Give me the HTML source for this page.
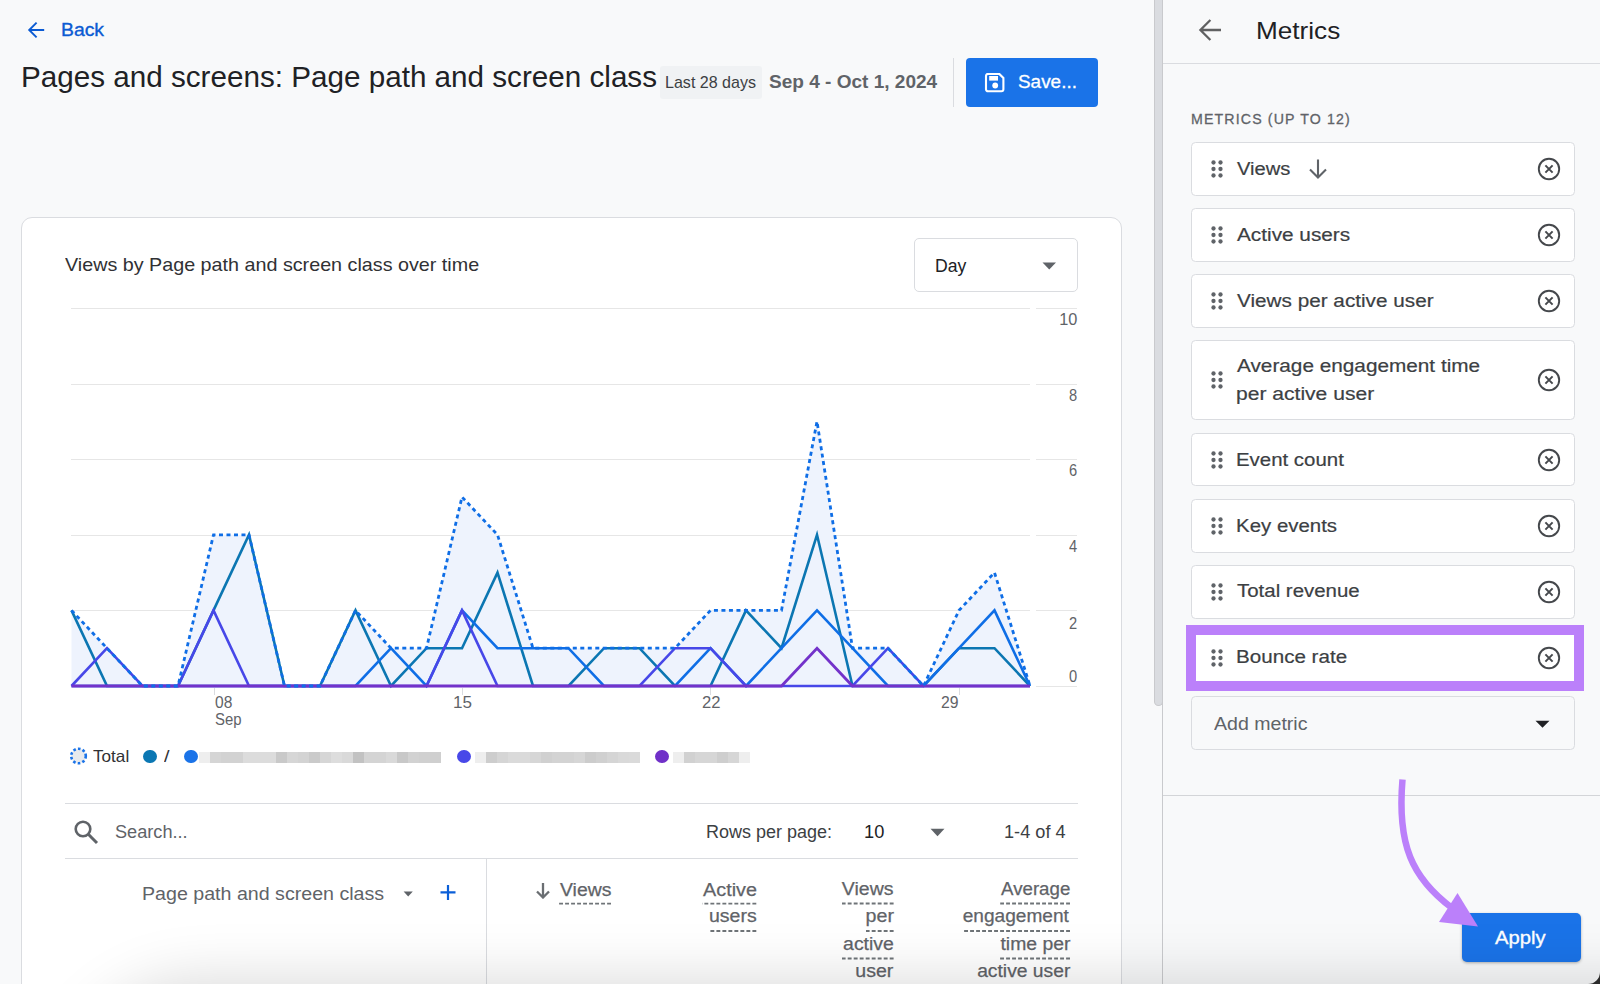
<!DOCTYPE html><html><head><meta charset="utf-8"><style>
*{margin:0;padding:0;box-sizing:border-box}
html,body{width:1600px;height:984px;overflow:hidden;background:#f8f9fa}
body{position:relative;font-family:"Liberation Sans",sans-serif}
.t{position:absolute;white-space:nowrap}
.abs{position:absolute}
</style></head><body><svg class="abs" style="left:26px;top:20px" width="20" height="20" viewBox="0 0 20 20"><path d="M18.2 10H4M10.6 2.6L3.2 10l7.4 7.4" fill="none" stroke="#0b5bd3" stroke-width="1.9"/></svg>
<div id="back" class="t" style="left:61.46px;top:21.00px;font-size:18.7px;line-height:18.7px;color:#0b5bd3;font-weight:400;transform:scaleX(1.0364);transform-origin:left 0;-webkit-text-stroke:0.35px #0b5bd3;">Back</div>
<div id="title" class="t" style="left:20.68px;top:62.00px;font-size:29.3px;line-height:29.3px;color:#202124;font-weight:400;transform:scaleX(1.0117);transform-origin:left 0;">Pages and screens: Page path and screen class</div>
<div class="abs" style="left:660px;top:66px;width:102px;height:32.5px;background:#f0f2f4;border-radius:3px"></div>
<div id="chip" class="t" style="left:665.46px;top:74.00px;font-size:17px;line-height:17px;color:#3c4043;font-weight:400;transform:scaleX(0.9442);transform-origin:left 0;">Last 28 days</div>
<div id="date" class="t" style="left:769.30px;top:73.00px;font-size:18.5px;line-height:18.5px;color:#5f6368;font-weight:700;transform:scaleX(1.0285);transform-origin:left 0;">Sep 4 - Oct 1, 2024</div>
<div class="abs" style="left:953px;top:58px;width:1px;height:49px;background:#dadce0"></div>
<div class="abs" style="left:966px;top:58px;width:132px;height:48.5px;background:#1a73e8;border-radius:4px"></div>
<svg class="abs" style="left:984px;top:73px" width="22" height="20" viewBox="0 0 22 20"><path d="M4 0.9h11.3l4.1 4.1v11.3a2 2 0 0 1-2 2H4a2 2 0 0 1-2-2V2.9a2 2 0 0 1 2-2z" fill="none" stroke="#fff" stroke-width="2.1"/><rect x="5.2" y="3" width="8.8" height="4.6" fill="#fff"/><circle cx="11.2" cy="12.5" r="2.9" fill="#fff"/></svg>
<div id="save" class="t" style="left:1018.00px;top:73.00px;font-size:18.7px;line-height:18.7px;color:#fff;font-weight:400;transform:scaleX(1.0127);transform-origin:left 0;-webkit-text-stroke:0.3px #fff;">Save...</div>
<div class="abs" style="left:21px;top:217px;width:1101px;height:800px;background:#fff;border:1px solid #dadce0;border-radius:11px"></div>
<div id="ctitle" class="t" style="left:65.30px;top:256.00px;font-size:18.5px;line-height:18.5px;color:#303134;font-weight:400;transform:scaleX(1.0663);transform-origin:left 0;">Views by Page path and screen class over time</div>
<div class="abs" style="left:913.5px;top:237.5px;width:164.5px;height:54.5px;background:#fff;border:1px solid #dadce0;border-radius:5px"></div>
<div id="day" class="t" style="left:935.06px;top:257.00px;font-size:18.7px;line-height:18.7px;color:#202124;font-weight:400;transform:scaleX(0.9426);transform-origin:left 0;">Day</div>
<svg class="abs" style="left:1042px;top:262px" width="15" height="8" viewBox="0 0 15 8"><path d="M0.5 0.5h13.5L7.25 7.5z" fill="#5f6368"/></svg>
<svg class="abs" style="left:0;top:0" width="1600" height="984" viewBox="0 0 1600 984"><line x1="71" y1="610.5" x2="1030" y2="610.5" stroke="#e6e6e6" stroke-width="1"/><line x1="1036" y1="610.5" x2="1077" y2="610.5" stroke="#e6e6e6" stroke-width="1"/><line x1="71" y1="535.5" x2="1030" y2="535.5" stroke="#e6e6e6" stroke-width="1"/><line x1="1036" y1="535.5" x2="1077" y2="535.5" stroke="#e6e6e6" stroke-width="1"/><line x1="71" y1="459.5" x2="1030" y2="459.5" stroke="#e6e6e6" stroke-width="1"/><line x1="1036" y1="459.5" x2="1077" y2="459.5" stroke="#e6e6e6" stroke-width="1"/><line x1="71" y1="384.5" x2="1030" y2="384.5" stroke="#e6e6e6" stroke-width="1"/><line x1="1036" y1="384.5" x2="1077" y2="384.5" stroke="#e6e6e6" stroke-width="1"/><line x1="71" y1="308.5" x2="1030" y2="308.5" stroke="#e6e6e6" stroke-width="1"/><line x1="1036" y1="308.5" x2="1077" y2="308.5" stroke="#e6e6e6" stroke-width="1"/><line x1="1036" y1="686.5" x2="1077" y2="686.5" stroke="#e6e6e6" stroke-width="1"/><line x1="214.5" y1="688" x2="214.5" y2="695" stroke="#dadce0" stroke-width="1"/><line x1="462.5" y1="688" x2="462.5" y2="695" stroke="#dadce0" stroke-width="1"/><line x1="710.5" y1="688" x2="710.5" y2="695" stroke="#dadce0" stroke-width="1"/><line x1="959.5" y1="688" x2="959.5" y2="695" stroke="#dadce0" stroke-width="1"/><path d="M71.50,686.0 L71.50,610.40 L107.00,648.20 L142.50,686.00 L178.00,686.00 L213.50,534.80 L249.00,534.80 L284.50,686.00 L320.00,686.00 L355.50,610.40 L391.00,648.20 L426.50,648.20 L462.00,497.00 L497.50,534.80 L533.00,648.20 L568.50,648.20 L604.00,648.20 L639.50,648.20 L675.00,648.20 L710.50,610.40 L746.00,610.40 L781.50,610.40 L817.00,421.40 L852.50,648.20 L888.00,648.20 L923.50,686.00 L959.00,610.40 L994.50,572.60 L1030.00,686.00 L1030.00,686.0 Z" fill="#eef3fd"/><polyline points="71.50,610.40 107.00,686.00 142.50,686.00 178.00,686.00 213.50,610.40 249.00,534.80 284.50,686.00 320.00,686.00 355.50,610.40 391.00,686.00 426.50,648.20 462.00,648.20 497.50,572.60 533.00,686.00 568.50,686.00 604.00,648.20 639.50,648.20 675.00,686.00 710.50,686.00 746.00,610.40 781.50,648.20 817.00,534.80 852.50,686.00 888.00,686.00 923.50,686.00 959.00,648.20 994.50,648.20 1030.00,686.00" fill="none" stroke="#0b76b2" stroke-width="2.6" stroke-linejoin="miter"/><polyline points="71.50,686.00 107.00,686.00 142.50,686.00 178.00,686.00 213.50,686.00 249.00,686.00 284.50,686.00 320.00,686.00 355.50,686.00 391.00,648.20 426.50,686.00 462.00,610.40 497.50,648.20 533.00,648.20 568.50,648.20 604.00,686.00 639.50,686.00 675.00,686.00 710.50,648.20 746.00,686.00 781.50,648.20 817.00,610.40 852.50,648.20 888.00,686.00 923.50,686.00 959.00,648.20 994.50,610.40 1030.00,686.00" fill="none" stroke="#0f6ee6" stroke-width="2.6"/><polyline points="71.50,686.00 107.00,648.20 142.50,686.00 178.00,686.00 213.50,610.40 249.00,686.00 284.50,686.00 320.00,686.00 355.50,686.00 391.00,686.00 426.50,686.00 462.00,610.40 497.50,686.00 533.00,686.00 568.50,686.00 604.00,686.00 639.50,686.00 675.00,648.20 710.50,648.20 746.00,686.00 781.50,686.00 817.00,686.00 852.50,686.00 888.00,648.20 923.50,686.00 959.00,686.00 994.50,686.00 1030.00,686.00" fill="none" stroke="#4747e8" stroke-width="2.6"/><polyline points="71.50,686.00 107.00,686.00 142.50,686.00 178.00,686.00 213.50,686.00 249.00,686.00 284.50,686.00 320.00,686.00 355.50,686.00 391.00,686.00 426.50,686.00 462.00,686.00 497.50,686.00 533.00,686.00 568.50,686.00 604.00,686.00 639.50,686.00 675.00,686.00 710.50,686.00 746.00,686.00 781.50,686.00 817.00,648.20 852.50,686.00 888.00,686.00 923.50,686.00 959.00,686.00 994.50,686.00 1030.00,686.00" fill="none" stroke="#7332ca" stroke-width="2.8"/><polyline points="71.50,610.40 107.00,648.20 142.50,686.00 178.00,686.00 213.50,534.80 249.00,534.80 284.50,686.00 320.00,686.00 355.50,610.40 391.00,648.20 426.50,648.20 462.00,497.00 497.50,534.80 533.00,648.20 568.50,648.20 604.00,648.20 639.50,648.20 675.00,648.20 710.50,610.40 746.00,610.40 781.50,610.40 817.00,421.40 852.50,648.20 888.00,648.20 923.50,686.00 959.00,610.40 994.50,572.60 1030.00,686.00" fill="none" stroke="#0f6ee6" stroke-width="2.8" stroke-dasharray="4 3.5"/></svg>
<div id="y10" class="t" style="right:522.83px;top:311.00px;font-size:16.5px;line-height:16.5px;color:#5f6368;font-weight:400;transform:scaleX(0.9897);transform-origin:right 0;">10</div>
<div id="y8" class="t" style="right:522.84px;top:387.00px;font-size:16.5px;line-height:16.5px;color:#5f6368;font-weight:400;transform:scaleX(0.8889);transform-origin:right 0;">8</div>
<div id="y6" class="t" style="right:522.84px;top:462.00px;font-size:16.5px;line-height:16.5px;color:#5f6368;font-weight:400;transform:scaleX(0.8889);transform-origin:right 0;">6</div>
<div id="y4" class="t" style="right:522.84px;top:538.00px;font-size:16.5px;line-height:16.5px;color:#5f6368;font-weight:400;transform:scaleX(0.8889);transform-origin:right 0;">4</div>
<div id="y2" class="t" style="right:522.84px;top:615.00px;font-size:16.5px;line-height:16.5px;color:#5f6368;font-weight:400;transform:scaleX(0.8889);transform-origin:right 0;">2</div>
<div id="y0" class="t" style="right:522.84px;top:668.00px;font-size:16.5px;line-height:16.5px;color:#5f6368;font-weight:400;transform:scaleX(0.8889);transform-origin:right 0;">0</div>
<div id="x08" class="t" style="left:214.60px;top:695.00px;font-size:16px;line-height:16px;color:#5f6368;font-weight:400;transform:scaleX(0.9722);transform-origin:left 0;">08</div>
<div id="xsep" class="t" style="left:214.60px;top:712.00px;font-size:16px;line-height:16px;color:#5f6368;font-weight:400;transform:scaleX(0.9310);transform-origin:left 0;">Sep</div>
<div id="x15" class="t" style="left:452.94px;top:695.00px;font-size:16px;line-height:16px;color:#5f6368;font-weight:400;transform:scaleX(1.0652);transform-origin:left 0;">15</div>
<div id="x22" class="t" style="left:702.00px;top:695.00px;font-size:16px;line-height:16px;color:#5f6368;font-weight:400;transform:scaleX(1.0392);transform-origin:left 0;">22</div>
<div id="x29" class="t" style="left:941.40px;top:695.00px;font-size:16px;line-height:16px;color:#5f6368;font-weight:400;transform:scaleX(0.9833);transform-origin:left 0;">29</div>
<svg class="abs" style="left:68px;top:746px" width="22" height="22" viewBox="0 0 22 22"><circle cx="10.5" cy="10" r="7.3" fill="#e8eaed" stroke="#1a73e8" stroke-width="2.6" stroke-dasharray="2.6 2.2"/></svg>
<div id="ltotal" class="t" style="left:92.50px;top:748.00px;font-size:16.5px;line-height:16.5px;color:#303134;font-weight:400;transform:scaleX(1.0384);transform-origin:left 0;">Total</div>
<div class="abs" style="left:143px;top:749.5px;width:13.5px;height:13.5px;border-radius:50%;background:#0b77b3"></div>
<div id="lslash" class="t" style="left:163.50px;top:748.00px;font-size:16.5px;line-height:16.5px;color:#303134;font-weight:400;transform:scaleX(1.2000);transform-origin:left 0;">/</div>
<div class="abs" style="left:184px;top:749.5px;width:13.5px;height:13.5px;border-radius:50%;background:#1a73e8"></div>
<div class="abs" style="left:457px;top:749.5px;width:14px;height:13.5px;border-radius:50%;background:#4848e8"></div>
<div class="abs" style="left:655px;top:749.5px;width:14px;height:13.5px;border-radius:50%;background:#7030c8"></div>
<div class="abs" style="left:199.0px;top:752px;width:11px;height:11px;background:#eeeeee"></div><div class="abs" style="left:210.0px;top:752px;width:11px;height:11px;background:#d5d5d5"></div><div class="abs" style="left:221.0px;top:752px;width:11px;height:11px;background:#d2d2d2"></div><div class="abs" style="left:232.0px;top:752px;width:11px;height:11px;background:#d2d2d2"></div><div class="abs" style="left:243.0px;top:752px;width:11px;height:11px;background:#dcdcdc"></div><div class="abs" style="left:254.0px;top:752px;width:11px;height:11px;background:#dcdcdc"></div><div class="abs" style="left:265.0px;top:752px;width:11px;height:11px;background:#dcdcdc"></div><div class="abs" style="left:276.0px;top:752px;width:11px;height:11px;background:#c9c9c9"></div><div class="abs" style="left:287.0px;top:752px;width:11px;height:11px;background:#d6d6d6"></div><div class="abs" style="left:298.0px;top:752px;width:11px;height:11px;background:#d3d3d3"></div><div class="abs" style="left:309.0px;top:752px;width:11px;height:11px;background:#cacaca"></div><div class="abs" style="left:320.0px;top:752px;width:11px;height:11px;background:#d6d6d6"></div><div class="abs" style="left:331.0px;top:752px;width:11px;height:11px;background:#dddddd"></div><div class="abs" style="left:342.0px;top:752px;width:11px;height:11px;background:#d9d9d9"></div><div class="abs" style="left:353.0px;top:752px;width:11px;height:11px;background:#c2c2c2"></div><div class="abs" style="left:364.0px;top:752px;width:11px;height:11px;background:#d4d4d4"></div><div class="abs" style="left:375.0px;top:752px;width:11px;height:11px;background:#d4d4d4"></div><div class="abs" style="left:386.0px;top:752px;width:11px;height:11px;background:#d9d9d9"></div><div class="abs" style="left:397.0px;top:752px;width:11px;height:11px;background:#c8c8c8"></div><div class="abs" style="left:408.0px;top:752px;width:11px;height:11px;background:#d2d2d2"></div><div class="abs" style="left:419.0px;top:752px;width:11px;height:11px;background:#d0d0d0"></div><div class="abs" style="left:430.0px;top:752px;width:11px;height:11px;background:#cfcfcf"></div>
<div class="abs" style="left:475.0px;top:752px;width:11px;height:11px;background:#eeeeee"></div><div class="abs" style="left:486.0px;top:752px;width:11px;height:11px;background:#cdcdcd"></div><div class="abs" style="left:497.0px;top:752px;width:11px;height:11px;background:#d5d5d5"></div><div class="abs" style="left:508.0px;top:752px;width:11px;height:11px;background:#dadada"></div><div class="abs" style="left:519.0px;top:752px;width:11px;height:11px;background:#dadada"></div><div class="abs" style="left:530.0px;top:752px;width:11px;height:11px;background:#d6d6d6"></div><div class="abs" style="left:541.0px;top:752px;width:11px;height:11px;background:#d0d0d0"></div><div class="abs" style="left:552.0px;top:752px;width:11px;height:11px;background:#d3d3d3"></div><div class="abs" style="left:563.0px;top:752px;width:11px;height:11px;background:#d3d3d3"></div><div class="abs" style="left:574.0px;top:752px;width:11px;height:11px;background:#d6d6d6"></div><div class="abs" style="left:585.0px;top:752px;width:11px;height:11px;background:#cccccc"></div><div class="abs" style="left:596.0px;top:752px;width:11px;height:11px;background:#d0d0d0"></div><div class="abs" style="left:607.0px;top:752px;width:11px;height:11px;background:#d5d5d5"></div><div class="abs" style="left:618.0px;top:752px;width:11px;height:11px;background:#d9d9d9"></div><div class="abs" style="left:629.0px;top:752px;width:11px;height:11px;background:#dadada"></div>
<div class="abs" style="left:673.0px;top:752px;width:11px;height:11px;background:#eeeeee"></div><div class="abs" style="left:684.0px;top:752px;width:11px;height:11px;background:#d1d1d1"></div><div class="abs" style="left:695.0px;top:752px;width:11px;height:11px;background:#d6d6d6"></div><div class="abs" style="left:706.0px;top:752px;width:11px;height:11px;background:#d6d6d6"></div><div class="abs" style="left:717.0px;top:752px;width:11px;height:11px;background:#cecece"></div><div class="abs" style="left:728.0px;top:752px;width:11px;height:11px;background:#d6d6d6"></div><div class="abs" style="left:739.0px;top:752px;width:11px;height:11px;background:#eeeeee"></div>
<div class="abs" style="left:65px;top:803px;width:1013px;height:1px;background:#dadce0"></div>
<div class="abs" style="left:65px;top:858px;width:1013px;height:1px;background:#dadce0"></div>
<div class="abs" style="left:486px;top:859px;width:1px;height:130px;background:#dadce0"></div>
<svg class="abs" style="left:73px;top:819px" width="26" height="26" viewBox="0 0 26 26"><circle cx="10" cy="10" r="7.3" fill="none" stroke="#5f6368" stroke-width="2.6"/><path d="M15.3 15.3L24 24" stroke="#5f6368" stroke-width="3"/></svg>
<div id="search" class="t" style="left:114.50px;top:823.00px;font-size:18.7px;line-height:18.7px;color:#5f6368;font-weight:400;transform:scaleX(0.9715);transform-origin:left 0;">Search...</div>
<div id="rows" class="t" style="left:705.97px;top:824.00px;font-size:17.5px;line-height:17.5px;color:#3c4043;font-weight:400;transform:scaleX(1.0289);transform-origin:left 0;">Rows per page:</div>
<div id="ten" class="t" style="left:864.46px;top:824.00px;font-size:17.5px;line-height:17.5px;color:#202124;font-weight:400;transform:scaleX(1.0410);transform-origin:left 0;">10</div>
<svg class="abs" style="left:930px;top:828px" width="15" height="9" viewBox="0 0 15 9"><path d="M0.5 0.8h14L7.5 8.3z" fill="#5f6368"/></svg>
<div id="of4" class="t" style="left:1004.46px;top:824.00px;font-size:17.5px;line-height:17.5px;color:#3c4043;font-weight:400;transform:scaleX(1.0373);transform-origin:left 0;">1-4 of 4</div>
<div id="ppsc" class="t" style="left:142.25px;top:885.00px;font-size:18.7px;line-height:18.7px;color:#5f6368;font-weight:400;transform:scaleX(1.0498);transform-origin:left 0;">Page path and screen class</div>
<svg class="abs" style="left:402px;top:890px" width="12" height="8" viewBox="0 0 12 8"><path d="M1.6 1.6h9.2L6.2 6.6z" fill="#5f6368"/></svg>
<svg class="abs" style="left:439px;top:884px" width="18" height="17" viewBox="0 0 18 17"><path d="M9 1v15M1.5 8.3h15" stroke="#0b5fd8" stroke-width="2.2"/></svg>
<svg class="abs" style="left:535px;top:882px" width="16" height="17" viewBox="0 0 16 17"><path d="M8 1v14.5M2 9.5l6 6 6-6" fill="none" stroke="#6a6e72" stroke-width="2.3"/></svg>
<div id="hviews" class="t" style="left:560.00px;top:881.00px;font-size:18.7px;line-height:18.7px;color:#5f6368;font-weight:400;transform:scaleX(1.0373);transform-origin:left 0;-webkit-text-stroke:0.25px #5f6368;">Views</div>
<div id="hact1" class="t" style="right:843.28px;top:881.00px;font-size:18.7px;line-height:18.7px;color:#5f6368;font-weight:400;transform:scaleX(1.0575);transform-origin:right 0;-webkit-text-stroke:0.25px #5f6368;">Active</div>
<div id="hact2" class="t" style="right:843.34px;top:907.00px;font-size:18.7px;line-height:18.7px;color:#5f6368;font-weight:400;transform:scaleX(1.0439);transform-origin:right 0;-webkit-text-stroke:0.25px #5f6368;">users</div>
<div id="hvp0" class="t" style="right:706.04px;top:880.00px;font-size:18.7px;line-height:18.7px;color:#5f6368;font-weight:400;transform:scaleX(1.0434);transform-origin:right 0;-webkit-text-stroke:0.25px #5f6368;">Views</div>
<div id="hvp1" class="t" style="right:706.17px;top:907.00px;font-size:18.7px;line-height:18.7px;color:#5f6368;font-weight:400;transform:scaleX(1.0509);transform-origin:right 0;-webkit-text-stroke:0.25px #5f6368;">per</div>
<div id="hvp2" class="t" style="right:705.99px;top:935.00px;font-size:18.7px;line-height:18.7px;color:#5f6368;font-weight:400;transform:scaleX(1.0387);transform-origin:right 0;-webkit-text-stroke:0.25px #5f6368;">active</div>
<div id="hvp3" class="t" style="right:706.17px;top:962.00px;font-size:18.7px;line-height:18.7px;color:#5f6368;font-weight:400;transform:scaleX(1.0475);transform-origin:right 0;-webkit-text-stroke:0.25px #5f6368;">user</div>
<div id="hav0" class="t" style="right:529.61px;top:880.00px;font-size:18.7px;line-height:18.7px;color:#5f6368;font-weight:400;transform:scaleX(0.9989);transform-origin:right 0;-webkit-text-stroke:0.25px #5f6368;">Average</div>
<div id="hav1" class="t" style="right:530.83px;top:907.00px;font-size:18.7px;line-height:18.7px;color:#5f6368;font-weight:400;transform:scaleX(1.0219);transform-origin:right 0;-webkit-text-stroke:0.25px #5f6368;">engagement</div>
<div id="hav2" class="t" style="right:529.77px;top:935.00px;font-size:18.7px;line-height:18.7px;color:#5f6368;font-weight:400;transform:scaleX(1.0374);transform-origin:right 0;-webkit-text-stroke:0.25px #5f6368;">time per</div>
<div id="hav3" class="t" style="right:529.77px;top:962.00px;font-size:18.7px;line-height:18.7px;color:#5f6368;font-weight:400;transform:scaleX(1.0317);transform-origin:right 0;-webkit-text-stroke:0.25px #5f6368;">active user</div>
<svg class="abs" style="left:0;top:0" width="1600" height="984" viewBox="0 0 1600 984"><line x1="611" y1="903.6" x2="559" y2="903.6" stroke="#6f7478" stroke-width="1.8" stroke-dasharray="3.9 2.1"/><line x1="756.3" y1="903.6" x2="702" y2="903.6" stroke="#6f7478" stroke-width="1.8" stroke-dasharray="3.9 2.1"/><line x1="756.3" y1="931" x2="708.7" y2="931" stroke="#6f7478" stroke-width="1.8" stroke-dasharray="3.9 2.1"/><line x1="893.6" y1="903.5" x2="842" y2="903.5" stroke="#6f7478" stroke-width="1.8" stroke-dasharray="3.9 2.1"/><line x1="893.6" y1="931" x2="866" y2="931" stroke="#6f7478" stroke-width="1.8" stroke-dasharray="3.9 2.1"/><line x1="893.6" y1="958.5" x2="842" y2="958.5" stroke="#6f7478" stroke-width="1.8" stroke-dasharray="3.9 2.1"/><line x1="1070" y1="903.5" x2="1000.2" y2="903.5" stroke="#6f7478" stroke-width="1.8" stroke-dasharray="3.9 2.1"/><line x1="1070" y1="931" x2="962.4" y2="931" stroke="#6f7478" stroke-width="1.8" stroke-dasharray="3.9 2.1"/><line x1="1070" y1="958.5" x2="999.2" y2="958.5" stroke="#6f7478" stroke-width="1.8" stroke-dasharray="3.9 2.1"/></svg>
<div class="abs" style="left:1153.5px;top:0;width:9px;height:706px;background:#dadce0;border:1px solid #c9cacd;border-top:none;border-radius:0 0 5px 5px"></div>
<div class="abs" style="left:1162px;top:0;width:1px;height:984px;background:#c9cacd"></div>
<div class="abs" style="left:1163px;top:63px;width:437px;height:1px;background:#dadce0"></div>
<div class="abs" style="left:1163px;top:795px;width:437px;height:1px;background:#d3d5d8"></div>
<svg class="abs" style="left:1196px;top:18px" width="28" height="24" viewBox="0 0 28 24"><path d="M25 12H5M14.4 2L4.4 12l10 10" fill="none" stroke="#606162" stroke-width="2.3"/></svg>
<div id="metrics" class="t" style="left:1255.57px;top:19.00px;font-size:24.5px;line-height:24.5px;color:#202124;font-weight:400;transform:scaleX(1.0666);transform-origin:left 0;">Metrics</div>
<div id="mlabel" class="t" style="left:1190.76px;top:111.00px;font-size:15px;line-height:15px;color:#5f6368;font-weight:400;letter-spacing:1.2px;transform:scaleX(0.9452);transform-origin:left 0;-webkit-text-stroke:0.3px #5f6368;">METRICS (UP TO 12)</div>
<div class="abs" style="left:1191px;top:142px;width:384px;height:53.5px;background:#fff;border:1px solid #dadce0;border-radius:4.5px"></div>
<svg class="abs" style="left:1210.0px;top:158.1px" width="14" height="22" viewBox="0 0 14 22"><circle cx="3.5" cy="4.5" r="2.15" fill="#5f6368"/><circle cx="10.5" cy="4.5" r="2.15" fill="#5f6368"/><circle cx="3.5" cy="11" r="2.15" fill="#5f6368"/><circle cx="10.5" cy="11" r="2.15" fill="#5f6368"/><circle cx="3.5" cy="17.5" r="2.15" fill="#5f6368"/><circle cx="10.5" cy="17.5" r="2.15" fill="#5f6368"/></svg>
<svg class="abs" style="left:1536.3px;top:155.8px" width="26" height="26" viewBox="0 0 26 26"><circle cx="13" cy="13" r="10.2" fill="none" stroke="#45484c" stroke-width="1.9"/><path d="M9.4 9.4l7.2 7.2M16.6 9.4l-7.2 7.2" stroke="#45484c" stroke-width="2"/></svg>
<div id="m0_0" class="t" style="left:1237.00px;top:160.00px;font-size:18.7px;line-height:18.7px;color:#3c4043;font-weight:400;transform:scaleX(1.0780);transform-origin:left 0;-webkit-text-stroke:0.2px #3c4043;">Views</div>
<div class="abs" style="left:1191px;top:208px;width:384px;height:53.5px;background:#fff;border:1px solid #dadce0;border-radius:4.5px"></div>
<svg class="abs" style="left:1210.0px;top:224.1px" width="14" height="22" viewBox="0 0 14 22"><circle cx="3.5" cy="4.5" r="2.15" fill="#5f6368"/><circle cx="10.5" cy="4.5" r="2.15" fill="#5f6368"/><circle cx="3.5" cy="11" r="2.15" fill="#5f6368"/><circle cx="10.5" cy="11" r="2.15" fill="#5f6368"/><circle cx="3.5" cy="17.5" r="2.15" fill="#5f6368"/><circle cx="10.5" cy="17.5" r="2.15" fill="#5f6368"/></svg>
<svg class="abs" style="left:1536.3px;top:221.8px" width="26" height="26" viewBox="0 0 26 26"><circle cx="13" cy="13" r="10.2" fill="none" stroke="#45484c" stroke-width="1.9"/><path d="M9.4 9.4l7.2 7.2M16.6 9.4l-7.2 7.2" stroke="#45484c" stroke-width="2"/></svg>
<div id="m1_0" class="t" style="left:1237.00px;top:226.00px;font-size:18.7px;line-height:18.7px;color:#3c4043;font-weight:400;transform:scaleX(1.1121);transform-origin:left 0;-webkit-text-stroke:0.2px #3c4043;">Active users</div>
<div class="abs" style="left:1191px;top:274px;width:384px;height:53.8px;background:#fff;border:1px solid #dadce0;border-radius:4.5px"></div>
<svg class="abs" style="left:1210.0px;top:290.2px" width="14" height="22" viewBox="0 0 14 22"><circle cx="3.5" cy="4.5" r="2.15" fill="#5f6368"/><circle cx="10.5" cy="4.5" r="2.15" fill="#5f6368"/><circle cx="3.5" cy="11" r="2.15" fill="#5f6368"/><circle cx="10.5" cy="11" r="2.15" fill="#5f6368"/><circle cx="3.5" cy="17.5" r="2.15" fill="#5f6368"/><circle cx="10.5" cy="17.5" r="2.15" fill="#5f6368"/></svg>
<svg class="abs" style="left:1536.3px;top:288.0px" width="26" height="26" viewBox="0 0 26 26"><circle cx="13" cy="13" r="10.2" fill="none" stroke="#45484c" stroke-width="1.9"/><path d="M9.4 9.4l7.2 7.2M16.6 9.4l-7.2 7.2" stroke="#45484c" stroke-width="2"/></svg>
<div id="m2_0" class="t" style="left:1237.00px;top:292.00px;font-size:18.7px;line-height:18.7px;color:#3c4043;font-weight:400;transform:scaleX(1.1088);transform-origin:left 0;-webkit-text-stroke:0.2px #3c4043;">Views per active user</div>
<div class="abs" style="left:1191px;top:339.5px;width:384px;height:80.5px;background:#fff;border:1px solid #dadce0;border-radius:4.5px"></div>
<svg class="abs" style="left:1210.0px;top:369.1px" width="14" height="22" viewBox="0 0 14 22"><circle cx="3.5" cy="4.5" r="2.15" fill="#5f6368"/><circle cx="10.5" cy="4.5" r="2.15" fill="#5f6368"/><circle cx="3.5" cy="11" r="2.15" fill="#5f6368"/><circle cx="10.5" cy="11" r="2.15" fill="#5f6368"/><circle cx="3.5" cy="17.5" r="2.15" fill="#5f6368"/><circle cx="10.5" cy="17.5" r="2.15" fill="#5f6368"/></svg>
<svg class="abs" style="left:1536.3px;top:366.9px" width="26" height="26" viewBox="0 0 26 26"><circle cx="13" cy="13" r="10.2" fill="none" stroke="#45484c" stroke-width="1.9"/><path d="M9.4 9.4l7.2 7.2M16.6 9.4l-7.2 7.2" stroke="#45484c" stroke-width="2"/></svg>
<div id="m3_0" class="t" style="left:1237.00px;top:357.00px;font-size:18.7px;line-height:18.7px;color:#3c4043;font-weight:400;transform:scaleX(1.1109);transform-origin:left 0;-webkit-text-stroke:0.2px #3c4043;">Average engagement time</div>
<div id="m3_1" class="t" style="left:1235.87px;top:385.00px;font-size:18.7px;line-height:18.7px;color:#3c4043;font-weight:400;transform:scaleX(1.1274);transform-origin:left 0;-webkit-text-stroke:0.2px #3c4043;">per active user</div>
<div class="abs" style="left:1191px;top:433px;width:384px;height:53.3px;background:#fff;border:1px solid #dadce0;border-radius:4.5px"></div>
<svg class="abs" style="left:1210.0px;top:448.9px" width="14" height="22" viewBox="0 0 14 22"><circle cx="3.5" cy="4.5" r="2.15" fill="#5f6368"/><circle cx="10.5" cy="4.5" r="2.15" fill="#5f6368"/><circle cx="3.5" cy="11" r="2.15" fill="#5f6368"/><circle cx="10.5" cy="11" r="2.15" fill="#5f6368"/><circle cx="3.5" cy="17.5" r="2.15" fill="#5f6368"/><circle cx="10.5" cy="17.5" r="2.15" fill="#5f6368"/></svg>
<svg class="abs" style="left:1536.3px;top:446.8px" width="26" height="26" viewBox="0 0 26 26"><circle cx="13" cy="13" r="10.2" fill="none" stroke="#45484c" stroke-width="1.9"/><path d="M9.4 9.4l7.2 7.2M16.6 9.4l-7.2 7.2" stroke="#45484c" stroke-width="2"/></svg>
<div id="m4_0" class="t" style="left:1235.91px;top:451.00px;font-size:18.7px;line-height:18.7px;color:#3c4043;font-weight:400;transform:scaleX(1.0924);transform-origin:left 0;-webkit-text-stroke:0.2px #3c4043;">Event count</div>
<div class="abs" style="left:1191px;top:499.3px;width:384px;height:53.4px;background:#fff;border:1px solid #dadce0;border-radius:4.5px"></div>
<svg class="abs" style="left:1210.0px;top:515.3px" width="14" height="22" viewBox="0 0 14 22"><circle cx="3.5" cy="4.5" r="2.15" fill="#5f6368"/><circle cx="10.5" cy="4.5" r="2.15" fill="#5f6368"/><circle cx="3.5" cy="11" r="2.15" fill="#5f6368"/><circle cx="10.5" cy="11" r="2.15" fill="#5f6368"/><circle cx="3.5" cy="17.5" r="2.15" fill="#5f6368"/><circle cx="10.5" cy="17.5" r="2.15" fill="#5f6368"/></svg>
<svg class="abs" style="left:1536.3px;top:513.1px" width="26" height="26" viewBox="0 0 26 26"><circle cx="13" cy="13" r="10.2" fill="none" stroke="#45484c" stroke-width="1.9"/><path d="M9.4 9.4l7.2 7.2M16.6 9.4l-7.2 7.2" stroke="#45484c" stroke-width="2"/></svg>
<div id="m5_0" class="t" style="left:1235.91px;top:517.00px;font-size:18.7px;line-height:18.7px;color:#3c4043;font-weight:400;transform:scaleX(1.0932);transform-origin:left 0;-webkit-text-stroke:0.2px #3c4043;">Key events</div>
<div class="abs" style="left:1191px;top:565px;width:384px;height:53.8px;background:#fff;border:1px solid #dadce0;border-radius:4.5px"></div>
<svg class="abs" style="left:1210.0px;top:581.2px" width="14" height="22" viewBox="0 0 14 22"><circle cx="3.5" cy="4.5" r="2.15" fill="#5f6368"/><circle cx="10.5" cy="4.5" r="2.15" fill="#5f6368"/><circle cx="3.5" cy="11" r="2.15" fill="#5f6368"/><circle cx="10.5" cy="11" r="2.15" fill="#5f6368"/><circle cx="3.5" cy="17.5" r="2.15" fill="#5f6368"/><circle cx="10.5" cy="17.5" r="2.15" fill="#5f6368"/></svg>
<svg class="abs" style="left:1536.3px;top:579.0px" width="26" height="26" viewBox="0 0 26 26"><circle cx="13" cy="13" r="10.2" fill="none" stroke="#45484c" stroke-width="1.9"/><path d="M9.4 9.4l7.2 7.2M16.6 9.4l-7.2 7.2" stroke="#45484c" stroke-width="2"/></svg>
<div id="m6_0" class="t" style="left:1237.00px;top:582.00px;font-size:18.7px;line-height:18.7px;color:#3c4043;font-weight:400;transform:scaleX(1.0939);transform-origin:left 0;-webkit-text-stroke:0.2px #3c4043;">Total revenue</div>
<div class="abs" style="left:1191px;top:631px;width:384px;height:54.0px;background:#fff;border:1px solid #dadce0;border-radius:4.5px"></div>
<svg class="abs" style="left:1210.0px;top:647.3px" width="14" height="22" viewBox="0 0 14 22"><circle cx="3.5" cy="4.5" r="2.15" fill="#5f6368"/><circle cx="10.5" cy="4.5" r="2.15" fill="#5f6368"/><circle cx="3.5" cy="11" r="2.15" fill="#5f6368"/><circle cx="10.5" cy="11" r="2.15" fill="#5f6368"/><circle cx="3.5" cy="17.5" r="2.15" fill="#5f6368"/><circle cx="10.5" cy="17.5" r="2.15" fill="#5f6368"/></svg>
<svg class="abs" style="left:1536.3px;top:645.1px" width="26" height="26" viewBox="0 0 26 26"><circle cx="13" cy="13" r="10.2" fill="none" stroke="#45484c" stroke-width="1.9"/><path d="M9.4 9.4l7.2 7.2M16.6 9.4l-7.2 7.2" stroke="#45484c" stroke-width="2"/></svg>
<div id="m7_0" class="t" style="left:1235.90px;top:648.00px;font-size:18.7px;line-height:18.7px;color:#3c4043;font-weight:400;transform:scaleX(1.1028);transform-origin:left 0;-webkit-text-stroke:0.2px #3c4043;">Bounce rate</div>
<svg class="abs" style="left:1307px;top:158px" width="22" height="21" viewBox="0 0 22 21"><path d="M11 1.5v17.5M3 11.5l8 8 8-8" fill="none" stroke="#5f6368" stroke-width="2.1"/></svg>
<div class="abs" style="left:1186.3px;top:625px;width:397.5px;height:65.5px;border:10px solid #bb80fa"></div>
<div class="abs" style="left:1191px;top:696.3px;width:384px;height:54px;background:#f8f9fa;border:1px solid #dadce0;border-radius:4.5px"></div>
<div id="addm" class="t" style="left:1213.60px;top:715.00px;font-size:18.7px;line-height:18.7px;color:#5f6368;font-weight:400;transform:scaleX(1.0464);transform-origin:left 0;">Add metric</div>
<svg class="abs" style="left:1535px;top:720px" width="15" height="9" viewBox="0 0 15 9"><path d="M0.5 0.8h14L7.5 7.8z" fill="#202124"/></svg>
<div class="abs" style="left:1462px;top:913px;width:118.5px;height:48.5px;background:#1a73e8;border-radius:5px;box-shadow:0 1px 3px rgba(0,0,0,.3)"></div>
<div id="apply" class="t" style="left:1495.30px;top:929.00px;font-size:18.7px;line-height:18.7px;color:#fff;font-weight:400;transform:scaleX(1.0801);transform-origin:left 0;-webkit-text-stroke:0.35px #fff;">Apply</div>
<svg class="abs" style="left:0;top:0" width="1600" height="984" viewBox="0 0 1600 984"><path d="M1402.5 779.5C1397 845 1412 878 1452 908" fill="none" stroke="#bb80fa" stroke-width="6.5"/><path d="M1457.5 893L1439 922L1478 926.5Z" fill="#bb80fa"/></svg>
<div class="abs" style="left:0;top:0;width:1600px;height:984px;overflow:hidden;pointer-events:none"><div class="abs" style="left:90px;top:1005px;width:1700px;height:300px;border-radius:110px;background:#000;box-shadow:0 0 60px 25px rgba(0,0,0,0.15)"></div></div>
<svg class="abs" style="left:1588px;top:972px" width="12" height="12" viewBox="0 0 12 12"><path d="M12 0V12H0A12 12 0 0 0 12 0z" fill="#2b2b2b"/></svg></body></html>
